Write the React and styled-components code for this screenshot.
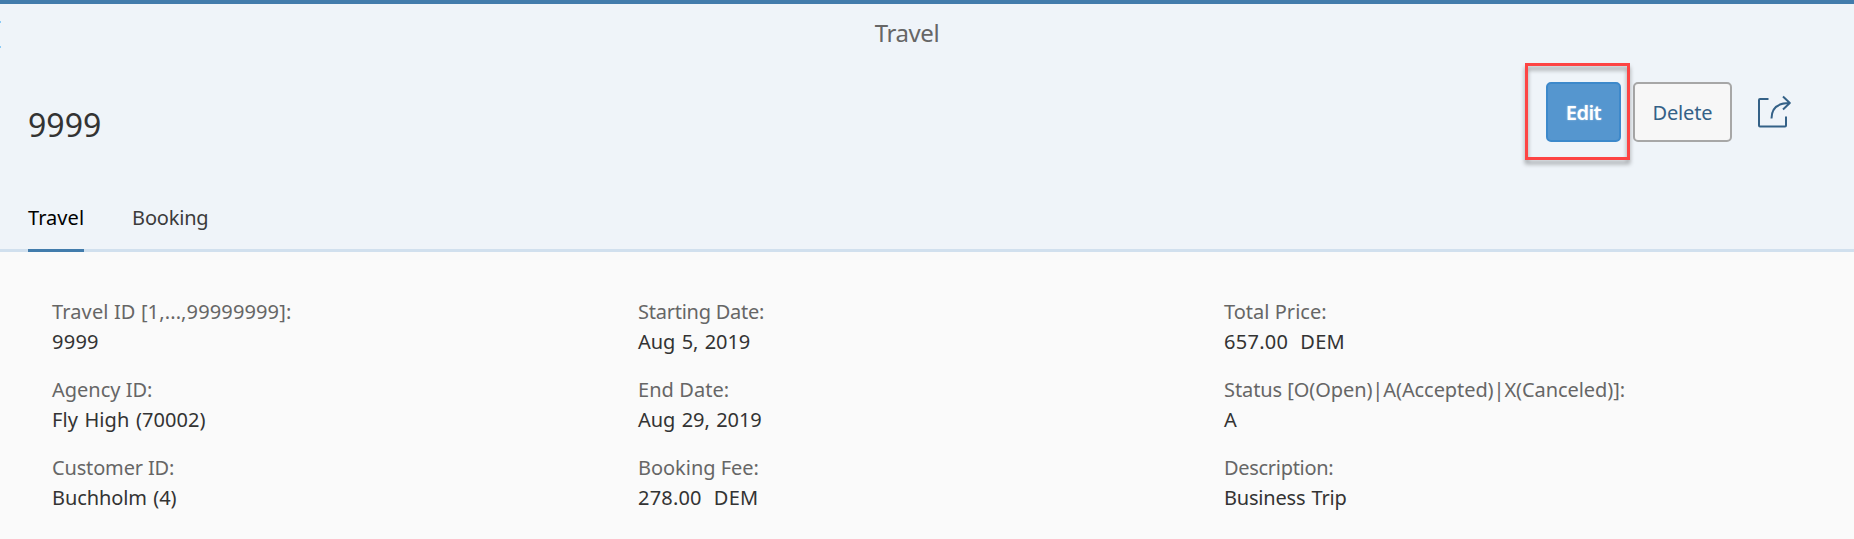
import React from "react";
import styled, { createGlobalStyle } from "styled-components";

const GlobalStyle = createGlobalStyle`
  *, *::after { box-sizing: border-box; }
  body {
    margin: 0;
    background: #fafafa;
    color: #333;
    font: 20px/30px "Noto Sans", sans-serif;
  }
`;

const Page = styled.div`
  height: 539px;
  overflow: hidden;
  background: #fafafa;
`;

const Header = styled.header`
  height: 252px;
  display: flex;
  flex-direction: column;
  background: #eff4f9;
  border-top: 4px solid #427cac;
`;

const ShellBar = styled.div`
  height: 58px;
  display: flex;
  align-items: center;
`;

const BackIcon = styled.svg`
  width: 1px;
  height: 28px;
  flex: none;
  margin-top: 2px;
`;

const ShellTitle = styled.div`
  flex: 1;
  padding-right: 41px;
  text-align: center;
  font-size: 24px;
  letter-spacing: -0.45px;
  color: #666;
`;

const TitleRow = styled.div`
  height: 118px;
  padding: 20px 63px 0 28px;
  display: flex;
  justify-content: space-between;
  align-items: flex-start;
`;

const Title = styled.h1`
  margin: 22px 0 0;
  font-size: 32px;
  line-height: 42px;
  font-weight: 400;
  letter-spacing: 0.05px;
`;

const Actions = styled.div`
  display: flex;
  align-items: center;
`;

const Highlighted = styled.div`
  position: relative;
  margin-right: 12px;

  &::after {
    content: "";
    position: absolute;
    left: -21px;
    top: -19px;
    width: 105px;
    height: 97px;
    border: 3px solid #fd4444;
    filter: drop-shadow(0 4px 2px rgba(0, 0, 0, 0.36));
    pointer-events: none;
  }
`;

const Button = styled.button`
  display: block;
  width: ${(p) => (p.$emphasized ? 75 : 99)}px;
  height: 60px;
  padding: 2px 0 0;
  border: 2px solid ${(p) => (p.$emphasized ? "#3d89cb" : "#a7a7a7")};
  border-radius: 5px;
  background: ${(p) => (p.$emphasized ? "#5596cf" : "#f7f7f7")};
  color: ${(p) => (p.$emphasized ? "#fff" : "#346187")};
  font: ${(p) => (p.$emphasized ? 600 : 400)} 20px/30px "Noto Sans", sans-serif;
  letter-spacing: ${(p) => (p.$emphasized ? -0.5 : -0.15)}px;
  text-shadow: ${(p) => (p.$emphasized ? "0 0 2px rgba(255, 255, 255, 0.5)" : "none")};
`;

const ShareIcon = styled.svg`
  width: 36px;
  height: 36px;
  margin-left: 23px;
  fill: none;
  stroke: #346187;
  stroke-width: 2;
  stroke-linecap: butt;
  stroke-linejoin: round;
`;

const Tabs = styled.nav`
  flex: 1;
  display: flex;
  align-items: flex-end;
  gap: 48px;
  padding-left: 28px;
  box-shadow: inset 0 -3px #d1e0ee;
`;

const Tab = styled.div`
  height: 49px;
  border-bottom: 3px solid ${(p) => (p.$selected ? "#427cac" : "transparent")};
  color: ${(p) => (p.$selected ? "#000" : "#3b3b3b")};
  letter-spacing: ${(p) => p.$track}px;
`;

const Form = styled.main`
  display: grid;
  grid-template-columns: repeat(3, 586px);
  row-gap: 18px;
  padding: 45px 0 0 52px;
  white-space: pre;
`;

const Label = styled.div`
  color: #666;
  letter-spacing: ${(p) => p.$track}px;
`;

const Value = styled.div`
  display: flex;
  gap: 12px;
  word-spacing: 1.2px;
  letter-spacing: ${(p) => p.$track}px;
`;

const Currency = styled.span`
  letter-spacing: 0.3px;
`;

const fields = [
  { label: "Travel ID [1,...,99999999]:", lt: 0.13, value: "9999", vt: 0.25 },
  { label: "Starting Date:", lt: -0.24, value: "Aug 5, 2019", vt: -0.05 },
  { label: "Total Price:", lt: 0.02, value: "657.00", vt: 0.28, unit: "DEM" },
  { label: "Agency ID:", lt: 0, value: "Fly High (70002)", vt: 0.08 },
  { label: "End Date:", lt: 0.06, value: "Aug 29, 2019", vt: -0.04 },
  { label: "Status [O(Open)|A(Accepted)|X(Canceled)]:", lt: -0.08, value: "A", vt: 0 },
  { label: "Customer ID:", lt: -0.16, value: "Buchholm (4)", vt: -0.09 },
  { label: "Booking Fee:", lt: -0.03, value: "278.00", vt: 0.2, unit: "DEM" },
  { label: "Description:", lt: -0.3, value: "Business Trip", vt: -0.2 },
];

export default function App() {
  return (
    <Page>
      <GlobalStyle />
      <Header>
        <ShellBar>
          <BackIcon viewBox="0 0 1 28">
            <path d="M0 2h1M0 27h1" stroke="#8ccbf6" strokeWidth="2" />
          </BackIcon>
          <ShellTitle>Travel</ShellTitle>
        </ShellBar>
        <TitleRow>
          <Title>9999</Title>
          <Actions>
            <Highlighted>
              <Button $emphasized>Edit</Button>
            </Highlighted>
            <Button>Delete</Button>
            <ShareIcon viewBox="0 0 36 36">
              <path d="M13.500 5H5Q4 5 4 6V31.500Q4 32.500 5 32.500H30Q31 32.500 31 31.500V22.500" />
              <path d="M16.500 24.500C16.500 14 22 9 34.500 9M28 2.500L34.800 9L28 15.500" />
            </ShareIcon>
          </Actions>
        </TitleRow>
        <Tabs>
          <Tab $selected $track={0.05}>Travel</Tab>
          <Tab $track={-0.2}>Booking</Tab>
        </Tabs>
      </Header>
      <Form>
        {fields.map((f) => (
          <div key={f.label}>
            <Label $track={f.lt}>{f.label}</Label>
            <Value $track={f.vt}>
              <span>{f.value}</span>
              {f.unit && <Currency>{f.unit}</Currency>}
            </Value>
          </div>
        ))}
      </Form>
    </Page>
  );
}
